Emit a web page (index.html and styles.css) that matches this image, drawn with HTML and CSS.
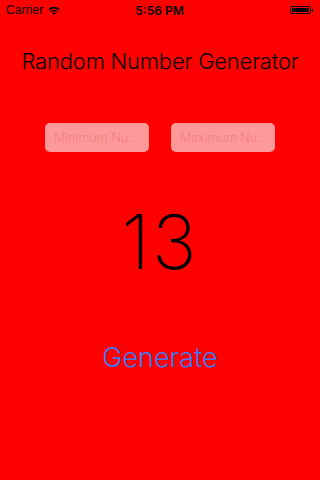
FILE: index.html
```html
<!DOCTYPE html>
<html>
<head>
<meta charset="utf-8">
<link rel="stylesheet" href="styles.css">
</head>
<body>
<div class="screen">
  <div class="status">
    <div class="status-left">
      <span class="carrier">Carrier</span>
      <svg class="wifi" width="12" height="9" viewBox="0 0 12 9">
        <path d="M0.3 3.2 A8 8 0 0 1 11.7 3.2 L10.5 4.4 A6.3 6.3 0 0 0 1.5 4.4 Z" fill="#000"/>
        <path d="M2.3 5.2 A5.2 5.2 0 0 1 9.7 5.2 L8.5 6.4 A3.5 3.5 0 0 0 3.5 6.4 Z" fill="#000"/>
        <path d="M4.3 7.2 A2.4 2.4 0 0 1 7.7 7.2 L6 8.9 Z" fill="#000"/>
      </svg>
    </div>
    <div class="time">5:56 PM</div>
    <div class="status-right">
      <div class="battery"><div class="battery-fill"></div></div>
      <div class="battery-nub"></div>
    </div>
  </div>
  <h1 class="title">Random Number Generator</h1>
  <div class="fields">
    <div class="field">Minimum Nu…</div>
    <div class="field">Maximum Nu…</div>
  </div>
  <div class="number">13</div>
  <div class="generate">Generate</div>
</div>
</body>
</html>
```
FILE: styles.css
```css
html, body {
  margin: 0;
  padding: 0;
}
body {
  background: #ff0000;
  font-family: "Inter", "Liberation Sans", sans-serif;
  color: #000;
}
.screen {
  width: 320px;
  height: 480px;
  display: flex;
  flex-direction: column;
  align-items: center;
}
.status {
  width: 100%;
  height: 20px;
  display: flex;
  align-items: center;
  justify-content: space-between;
  padding: 0 6px;
  box-sizing: border-box;
  font-family: "Liberation Sans", sans-serif;
  font-size: 12px;
}
.status-left {
  display: flex;
  align-items: center;
  gap: 5px;
  width: 80px;
}
.carrier {
  letter-spacing: 0.1px;
}
.wifi {
  display: block;
}
.time {
  font-weight: 600;
  font-family: "Inter", "Liberation Sans", sans-serif;
  font-size: 12px;
}
.status-right {
  width: 80px;
  display: flex;
  justify-content: flex-end;
  align-items: center;
  padding-right: 1px;
}
.battery {
  width: 21px;
  height: 8px;
  border: 1px solid #000;
  border-radius: 2px;
  box-sizing: border-box;
  padding: 1px;
}
.battery-fill {
  width: 100%;
  height: 100%;
  background: #000;
  border-radius: 1px;
}
.battery-nub {
  width: 1.5px;
  height: 3px;
  background: #000;
  margin-left: 1px;
}
.title {
  margin: 26px 0 0;
  font-size: 22px;
  font-weight: 300;
  line-height: 30px;
  letter-spacing: -0.2px;
  white-space: nowrap;
}
.fields {
  margin-top: 47px;
  display: flex;
  gap: 22px;
}
.field {
  width: 104px;
  height: 29px;
  border-radius: 5px;
  background: #ff9999;
  color: #ee8282;
  font-size: 12.5px;
  font-weight: 300;
  line-height: 29px;
  padding-left: 9px;
  box-sizing: border-box;
  white-space: nowrap;
  overflow: hidden;
}
.number {
  margin-top: 45px;
  font-size: 75px;
  font-weight: 200;
  line-height: 90px;
  letter-spacing: 2px;
}
.generate {
  margin-top: 54px;
  font-size: 27px;
  font-weight: 300;
  line-height: 34px;
  color: #3a7af5;
}
```
